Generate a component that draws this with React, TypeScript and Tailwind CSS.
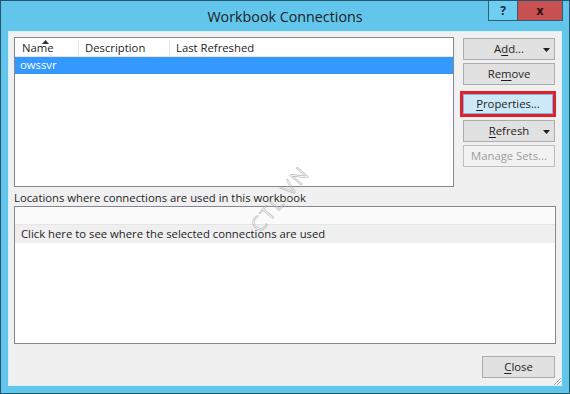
import React from "react"

const font = { fontFamily: '"Open Sans", "Noto Sans", Arial, sans-serif' }

function Key({ children }: { children: React.ReactNode }) {
  return <span className="underline underline-offset-2">{children}</span>
}

function Caret() {
  return (
    <svg width="7" height="4" viewBox="0 0 7 4" className="absolute right-[4px] top-[9px]">
      <path d="M0 0h7L3.5 4z" fill="#1e1e1e" />
    </svg>
  )
}

function Btn({
  children,
  caret,
  disabled,
  className = "",
}: {
  children: React.ReactNode
  caret?: boolean
  disabled?: boolean
  className?: string
}) {
  return (
    <div
      className={
        "relative flex h-[22px] items-center justify-center border text-[11.3px] " +
        (disabled
          ? "border-[#bfbfbf] bg-[#f2f2f2] text-[#9d9d9d] "
          : "border-[#acacac] bg-[#e1e1e1] text-[#1e1e1e] ") +
        className
      }
    >
      <span className="leading-none">{children}</span>
      {caret && <Caret />}
    </div>
  )
}

export default function App() {
  return (
    <div
      className="relative flex h-[394px] w-[570px] flex-col overflow-hidden border border-[#24566e] bg-[#62c6ec]"
      style={font}
    >
      {/* title bar */}
      <div className="relative flex h-[30px] shrink-0 items-center justify-center">
        <span className="pt-[1px] text-[14.3px] text-[#1c1c1c]">Workbook Connections</span>
        <div className="absolute right-[6px] top-[-1px] flex">
          <div className="flex h-[21px] w-[30px] items-center justify-center border border-[#2d5f78] bg-[#6fcdf0] text-[12px] font-bold text-[#0f2a44]">
            ?
          </div>
          <div className="flex h-[21px] w-[45px] items-center justify-center border-y border-r border-[#2d5f78] bg-[#c75050] text-[12px] font-bold text-[#2a0a0a]">
            x
          </div>
        </div>
      </div>

      {/* client area */}
      <div className="mx-[7px] flex h-[355px] shrink-0 flex-col border border-[#d9eef7] bg-[#f0f0f0] px-[5px] pt-[5px] text-[11.3px]">
        <div className="flex gap-[9px]">
          {/* connection list */}
          <div className="flex h-[150px] w-[440px] flex-col border border-[#828790] bg-white">
            <div className="flex h-[19px] border-b border-[#e5e5e5] pt-[2px] text-[#1e1e1e]">
              <div className="relative flex w-[64px] items-center border-r border-[#e5e5e5] pl-[7px]">
                Name
                <svg width="7" height="4" viewBox="0 0 7 4" className="absolute left-[27px] top-[0px]">
                  <path d="M3.5 0L7 4H0z" fill="#333" />
                </svg>
              </div>
              <div className="flex w-[91px] items-center border-r border-[#e5e5e5] pl-[6px]">Description</div>
              <div className="flex items-center pl-[6px]">Last Refreshed</div>
            </div>
            <div className="flex h-[17px] items-center bg-[#3399ff] pl-[5px] text-white">owssvr</div>
          </div>

          {/* buttons */}
          <div className="flex w-[92px] flex-col">
            <Btn caret className="mt-[1px]">
              A<Key>d</Key>d...
            </Btn>
            <Btn className="mt-[3px]">
              Re<Key>m</Key>ove
            </Btn>
            <div className="ml-[-3px] mt-[6px] w-[96px] border-[3px] border-[#e0202a]">
              <div className="flex h-[20px] items-center justify-center border border-[#7eb4ea] bg-[#cde8f7] text-[#1e1e1e]">
                <span className="leading-none">
                  <Key>P</Key>roperties...
                </span>
              </div>
            </div>
            <Btn caret className="mt-[3px]">
              <Key>R</Key>efresh
            </Btn>
            <Btn disabled className="mt-[3px]">
              Manage Sets...
            </Btn>
          </div>
        </div>

        <div className="mt-[3px] h-[16px] leading-[16px] text-[#1e1e1e]">Locations where connections are used in this workbook</div>
        <div className="flex h-[138px] w-[542px] flex-col border border-[#828790] bg-white">
          <div className="h-[18px] border-b border-[#e5e5e5] bg-[#fbfbfb]" />
          <div className="flex h-[18px] items-center bg-[#efefef] pl-[6px] text-[#1e1e1e]">
            Click here to see where the selected connections are used
          </div>
        </div>

        <div className="mt-[12px] flex justify-end pr-[1px]">
          <Btn className="w-[73px]">
            <Key>C</Key>lose
          </Btn>
        </div>
      </div>

      {/* resize grip */}
      <svg width="8" height="8" viewBox="0 0 8 8" className="absolute bottom-[8px] right-[8px]">
        <path d="M8 1L1 8M8 4L4 8" stroke="#a8a8a8" strokeWidth="1" />
      </svg>

      {/* watermark */}
      <div className="pointer-events-none absolute left-[240px] top-[183px] -rotate-[50deg] text-[20px] tracking-[2px] text-transparent [-webkit-text-stroke:0.6px_#b8b8b8]">
        CTL.VN
      </div>
    </div>
  )
}
